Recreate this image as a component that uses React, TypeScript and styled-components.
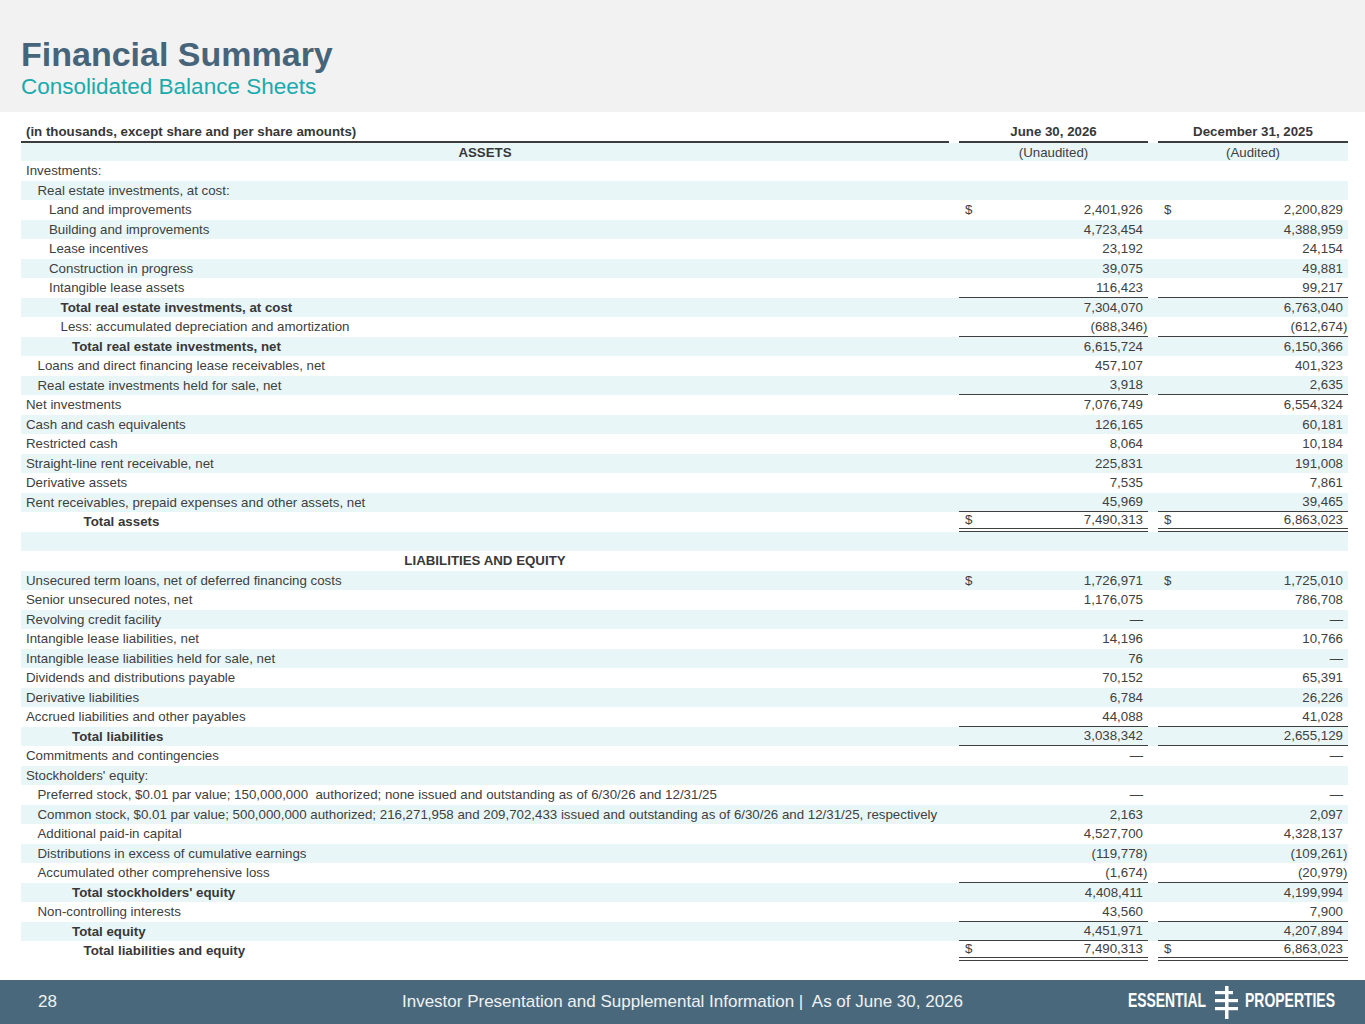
import * as React from 'react';
import styled, { createGlobalStyle } from 'styled-components';

const GlobalStyle = createGlobalStyle`
  html, body {
    margin: 0;
    padding: 0;
    background: #fff;
  }
  body {
    font-family: "Liberation Sans", Arial, sans-serif;
    color: #404040;
  }
`;

type Val = { v: string; dollar?: boolean };
type Line = 'single' | 'double';
type Item = {
  label: string;
  indent?: number;
  bold?: boolean;
  section?: boolean;
  a?: Val;
  b?: Val;
  line?: Line;
};

const d = (v: string): Val => ({ v, dollar: true });
const n = (v: string): Val => ({ v });
const DASH = '—';

const rows: Item[] = [
  { label: 'Investments:' },
  { label: 'Real estate investments, at cost:', indent: 1 },
  { label: 'Land and improvements', indent: 2, a: d('2,401,926'), b: d('2,200,829') },
  { label: 'Building and improvements', indent: 2, a: n('4,723,454'), b: n('4,388,959') },
  { label: 'Lease incentives', indent: 2, a: n('23,192'), b: n('24,154') },
  { label: 'Construction in progress', indent: 2, a: n('39,075'), b: n('49,881') },
  { label: 'Intangible lease assets', indent: 2, a: n('116,423'), b: n('99,217'), line: 'single' },
  { label: 'Total real estate investments, at cost', indent: 3, bold: true, a: n('7,304,070'), b: n('6,763,040') },
  { label: 'Less: accumulated depreciation and amortization', indent: 3, a: n('(688,346)'), b: n('(612,674)'), line: 'single' },
  { label: 'Total real estate investments, net', indent: 4, bold: true, a: n('6,615,724'), b: n('6,150,366') },
  { label: 'Loans and direct financing lease receivables, net', indent: 1, a: n('457,107'), b: n('401,323') },
  { label: 'Real estate investments held for sale, net', indent: 1, a: n('3,918'), b: n('2,635'), line: 'single' },
  { label: 'Net investments', a: n('7,076,749'), b: n('6,554,324') },
  { label: 'Cash and cash equivalents', a: n('126,165'), b: n('60,181') },
  { label: 'Restricted cash', a: n('8,064'), b: n('10,184') },
  { label: 'Straight-line rent receivable, net', a: n('225,831'), b: n('191,008') },
  { label: 'Derivative assets', a: n('7,535'), b: n('7,861') },
  { label: 'Rent receivables, prepaid expenses and other assets, net', a: n('45,969'), b: n('39,465'), line: 'single' },
  { label: 'Total assets', indent: 5, bold: true, a: d('7,490,313'), b: d('6,863,023'), line: 'double' },
  { label: '' },
  { label: 'LIABILITIES AND EQUITY', section: true },
  { label: 'Unsecured term loans, net of deferred financing costs', a: d('1,726,971'), b: d('1,725,010') },
  { label: 'Senior unsecured notes, net', a: n('1,176,075'), b: n('786,708') },
  { label: 'Revolving credit facility', a: n(DASH), b: n(DASH) },
  { label: 'Intangible lease liabilities, net', a: n('14,196'), b: n('10,766') },
  { label: 'Intangible lease liabilities held for sale, net', a: n('76'), b: n(DASH) },
  { label: 'Dividends and distributions payable', a: n('70,152'), b: n('65,391') },
  { label: 'Derivative liabilities', a: n('6,784'), b: n('26,226') },
  { label: 'Accrued liabilities and other payables', a: n('44,088'), b: n('41,028'), line: 'single' },
  { label: 'Total liabilities', indent: 4, bold: true, a: n('3,038,342'), b: n('2,655,129'), line: 'single' },
  { label: 'Commitments and contingencies', a: n(DASH), b: n(DASH) },
  { label: "Stockholders' equity:" },
  {
    label: 'Preferred stock, $0.01 par value; 150,000,000  authorized; none issued and outstanding as of 6/30/26 and 12/31/25',
    indent: 1,
    a: n(DASH),
    b: n(DASH),
  },
  {
    label:
      'Common stock, $0.01 par value; 500,000,000 authorized; 216,271,958 and 209,702,433 issued and outstanding as of 6/30/26 and 12/31/25, respectively',
    indent: 1,
    a: n('2,163'),
    b: n('2,097'),
  },
  { label: 'Additional paid-in capital', indent: 1, a: n('4,527,700'), b: n('4,328,137') },
  { label: 'Distributions in excess of cumulative earnings', indent: 1, a: n('(119,778)'), b: n('(109,261)') },
  { label: 'Accumulated other comprehensive loss', indent: 1, a: n('(1,674)'), b: n('(20,979)'), line: 'single' },
  { label: "Total stockholders' equity", indent: 4, bold: true, a: n('4,408,411'), b: n('4,199,994') },
  { label: 'Non-controlling interests', indent: 1, a: n('43,560'), b: n('7,900'), line: 'single' },
  { label: 'Total equity', indent: 4, bold: true, a: n('4,451,971'), b: n('4,207,894'), line: 'single' },
  { label: 'Total liabilities and equity', indent: 5, bold: true, a: d('7,490,313'), b: d('6,863,023'), line: 'double' },
];

const Page = styled.div`
  width: 1365px;
  height: 1024px;
  display: flex;
  flex-direction: column;
  overflow: hidden;
`;

const Header = styled.header`
  box-sizing: border-box;
  height: 112px;
  padding: 35px 21px 0;
  background: #f2f2f2;
`;

const Title = styled.h1`
  margin: 0;
  font-size: 34px;
  line-height: 38px;
  font-weight: 700;
  color: #46647a;
`;

const Subtitle = styled.h2`
  margin: 1px 0 0;
  font-size: 22.5px;
  line-height: 25px;
  font-weight: 400;
  color: #19aaad;
`;

const Sheet = styled.section`
  margin: 9px 17px 0 21px;
  font-size: 13.3px;
  line-height: 15px;
`;

const Row = styled.div<{ $shaded?: boolean; $height?: number }>`
  display: grid;
  grid-template-columns: 928px 189px 190px;
  column-gap: 10px;
  height: ${(p) => p.$height ?? 19.5}px;
  background: ${(p) => (p.$shaded ? '#e8f6f7' : 'transparent')};
`;

const HeadCell = styled.div<{ $align?: 'left' | 'center' }>`
  box-sizing: border-box;
  display: flex;
  align-items: center;
  justify-content: ${(p) => (p.$align === 'left' ? 'flex-start' : 'center')};
  padding-left: ${(p) => (p.$align === 'left' ? '5px' : '0')};
  border-bottom: 2px solid #3c3c3c;
  font-weight: 700;
  color: #383838;
`;

const Label = styled.div<{ $indent: number; $bold?: boolean; $center?: boolean }>`
  display: flex;
  align-items: center;
  justify-content: ${(p) => (p.$center ? 'center' : 'flex-start')};
  padding-left: ${(p) => (p.$center ? 0 : 5 + p.$indent * 11.5)}px;
  font-weight: ${(p) => (p.$bold ? 700 : 400)};
  color: ${(p) => (p.$bold ? '#383838' : '#404040')};
  white-space: pre;
`;

const SubHead = styled.div`
  display: flex;
  align-items: center;
  justify-content: center;
  color: #404040;
`;

const ValueCell = styled.div<{ $line?: Line }>`
  box-sizing: border-box;
  height: 100%;
  display: flex;
  align-items: center;
  justify-content: space-between;
  padding: 0 0.5px 0 6px;
  color: #404040;
  border-bottom: ${(p) =>
    p.$line === 'double' ? '4.5px double #404040' : p.$line === 'single' ? '1.5px solid #404040' : 'none'};
`;

const Amount = styled.span`
  margin-left: auto;
  white-space: nowrap;
`;

const Paren = styled.span`
  display: inline-block;
  width: 4.5px;
`;

const Footer = styled.footer`
  margin-top: auto;
  height: 44px;
  display: grid;
  grid-template-columns: 1fr auto 1fr;
  align-items: center;
  background: #4a687b;
  color: #eef2f5;
  font-size: 17px;
`;

const PageNum = styled.span`
  padding-left: 38px;
`;

const FooterText = styled.span`
  white-space: pre;
`;

const Logo = styled.svg`
  justify-self: end;
  display: block;
  margin-right: 30px;
  overflow: visible;
`;

const LogoText = styled.text`
  font-family: "Liberation Sans", Arial, sans-serif;
  font-weight: 700;
  font-size: 19.5px;
  fill: #fff;
`;

const Value = ({ val, line }: { val?: Val; line?: Line }) => {
  if (!val) return <ValueCell $line={line} />;
  const neg = val.v.endsWith(')');
  const body = neg ? val.v.slice(0, -1) : val.v;
  return (
    <ValueCell $line={line}>
      {val.dollar && <span>$</span>}
      <Amount>
        {body}
        <Paren>{neg ? ')' : ''}</Paren>
      </Amount>
    </ValueCell>
  );
};

const BrandLogo = () => (
  <Logo width="207" height="34" viewBox="0 0 207 34" aria-label="Essential Properties">
    <LogoText x="0" y="22" textLength="78" lengthAdjust="spacingAndGlyphs">
      ESSENTIAL
    </LogoText>
    <g fill="#fff">
      <rect x="97" y="1" width="3.5" height="33" />
      <rect x="87" y="6" width="18" height="3.2" />
      <rect x="87" y="14" width="23" height="3.2" />
      <rect x="87" y="22" width="23" height="3.2" />
    </g>
    <LogoText x="117" y="22" textLength="90" lengthAdjust="spacingAndGlyphs">
      PROPERTIES
    </LogoText>
  </Logo>
);

export default function App() {
  return (
    <>
      <GlobalStyle />
      <Page>
        <Header>
          <Title>Financial Summary</Title>
          <Subtitle>Consolidated Balance Sheets</Subtitle>
        </Header>

        <Sheet>
          <Row $height={22}>
            <HeadCell $align="left">(in thousands, except share and per share amounts)</HeadCell>
            <HeadCell>June 30, 2026</HeadCell>
            <HeadCell>December 31, 2025</HeadCell>
          </Row>
          <Row $shaded $height={18}>
            <Label $indent={0} $bold $center>
              ASSETS
            </Label>
            <SubHead>(Unaudited)</SubHead>
            <SubHead>(Audited)</SubHead>
          </Row>
          {rows.map((r, i) => (
            <Row key={i} $shaded={i % 2 === 1}>
              <Label $indent={r.indent ?? 0} $bold={r.bold || r.section} $center={r.section}>
                {r.label}
              </Label>
              <Value val={r.a} line={r.line} />
              <Value val={r.b} line={r.line} />
            </Row>
          ))}
        </Sheet>

        <Footer>
          <PageNum>28</PageNum>
          <FooterText>Investor Presentation and Supplemental Information |  As of June 30, 2026</FooterText>
          <BrandLogo />
        </Footer>
      </Page>
    </>
  );
}
